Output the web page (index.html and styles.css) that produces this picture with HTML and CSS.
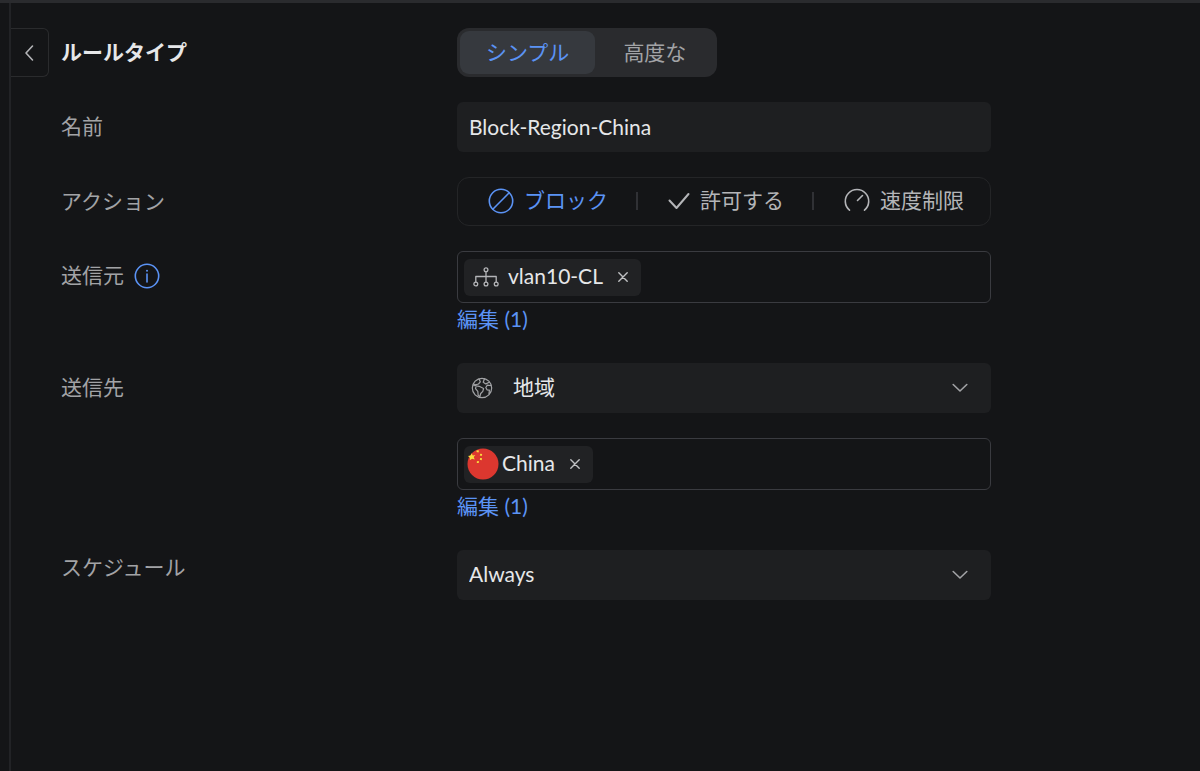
FILE: index.html
```html
<!DOCTYPE html>
<html lang="ja">
<head>
<meta charset="utf-8">
<meta name="viewport" content="width=device-width, initial-scale=1">
<title>ルールタイプ</title>
<link rel="stylesheet" href="styles.css">
</head>
<body>
<main class="panel">
  <button class="back" type="button" aria-label="戻る">
    <svg width="10" height="18" viewBox="0 0 10 18"><path d="M8.500 2 2 9l6.500 7"/></svg>
  </button>
  <form class="rule-form">
    <h1 class="title" id="type-label">ルールタイプ</h1>
    <div class="segmented" role="radiogroup" aria-labelledby="type-label">
      <label class="segment"><input type="radio" name="type" checked><span>シンプル</span></label>
      <label class="segment"><input type="radio" name="type"><span>高度な</span></label>
    </div>

    <label class="label" for="rule-name">名前</label>
    <input class="control" id="rule-name" type="text" value="Block-Region-China">

    <span class="label" id="action-label">アクション</span>
    <div class="actions" role="radiogroup" aria-labelledby="action-label">
      <label class="action"><input type="radio" name="action" checked>
        <svg width="26" height="26" viewBox="0 0 26 26"><circle cx="13" cy="13" r="11.700"/><path d="M4.800 21.200 21.200 4.800"/></svg><span>ブロック</span></label>
      <label class="action"><input type="radio" name="action">
        <svg class="check" width="22" height="26" viewBox="0 0 22 26"><path d="m1.500 12.500 7 7.500 12-14"/></svg><span>許可する</span></label>
      <label class="action"><input type="radio" name="action">
        <svg width="26" height="26" viewBox="0 0 26 26"><path d="M5.500 22.200a11.700 11.700 0 1 1 15 0M13.500 12.500l5-5"/></svg><span>速度制限</span></label>
    </div>

    <div class="label with-info"><label for="source">送信元</label>
      <button class="info" type="button" aria-label="情報">
        <svg width="26" height="26" viewBox="0 0 26 26"><circle cx="13" cy="13" r="11.700"/><path d="M13 11v8"/><circle class="dot" cx="13" cy="7.800" r="1"/></svg>
      </button>
    </div>
    <div class="field">
      <div class="tag-box">
        <span class="tag">
          <svg class="network" width="26" height="20" viewBox="0 0 26 20"><circle cx="13" cy="2.800" r="1.900"/><circle cx="2.800" cy="17" r="1.900"/><circle cx="13" cy="17" r="1.900"/><circle cx="23.200" cy="17" r="1.900"/><path d="M13 4.700v10.400M2.800 15.100V9.500h20.400v5.600"/></svg>
          <span class="text">vlan10-CL</span>
          <button class="remove" type="button" aria-label="vlan10-CL を削除"><svg width="10" height="10" viewBox="0 0 10 10"><path d="m.8.800 8.400 8.400M9.200.8.800 9.200"/></svg></button>
        </span>
        <input class="tag-input" id="source" type="text">
      </div>
      <a class="edit" href="#source">編集 (1)</a>
    </div>

    <label class="label" for="destination">送信先</label>
    <div class="select-wrap">
      <select class="control with-icon" id="destination"><option>地域</option></select>
      <svg class="globe" width="22" height="22" viewBox="0 0 22 22"><circle cx="11" cy="11" r="9.700"/><path d="M8 2l1.300 2.800L7.500 7 4.500 7.800 2.500 7M2.800 8.500l5.400.8 4.400 2.200-.8 2.800-2.100 2.200-.8 3-1.700-1-.4-4.200-2.300-2.700.7-2.800M13.500 1.800l-1.300 3.400 2.600 1.700 3.500-1.600M20 8.500l-3.700-.3-1.500 2.300 1.200 2.300 2.400.3-.4 3.800"/></svg>
      <svg class="chevron" width="16" height="10" viewBox="0 0 16 10"><path d="m1.200 1.500 6.800 6.500 6.800-6.500"/></svg>
    </div>

    <div class="field region">
      <div class="tag-box">
        <span class="tag flag-tag">
          <svg class="flag" width="32" height="32" viewBox="0 0 32 32"><circle cx="16" cy="16" r="15.500" fill="#dc372f"/><g fill="#f8dc3d"><path d="m4.600 5.200 1.200 2.200 2.600-.4-1.700 2.100 1 2.500-2.600-.8-2.300 1.500.1-2.600L1 8l2.600-.4z"/><path d="m9.700 2.200 2.300.2-.5 2-2-.3zM13.200 5.700l2 .4-.5 2-1.900-.5zM13.100 10l2 .2-.4 2-1.900-.4zM9.900 13.200l2-.2-.1 2-2 .1z"/></g></svg>
          <span class="text">China</span>
          <button class="remove" type="button" aria-label="China を削除"><svg width="10" height="10" viewBox="0 0 10 10"><path d="m.8.800 8.400 8.400M9.200.8.800 9.200"/></svg></button>
        </span>
        <input class="tag-input" id="region" type="text" aria-label="地域">
      </div>
      <a class="edit" href="#region">編集 (1)</a>
    </div>

    <label class="label schedule-label" for="schedule">スケジュール</label>
    <div class="select-wrap">
      <select class="control" id="schedule"><option>Always</option></select>
      <svg class="chevron" width="16" height="10" viewBox="0 0 16 10"><path d="m1.200 1.500 6.800 6.500 6.800-6.500"/></svg>
    </div>
  </form>
</main>
</body>
</html>
```
FILE: styles.css
```css
* { box-sizing: border-box; }

body {
  margin: 0;
  min-height: 100vh;
  display: flex;
  flex-direction: column;
  padding-left: 9px;
  background: #141517;
  box-shadow: inset 0 3px #2a2b2e;
  color: #e6e7e9;
  font: 21px/30px Lato, "Noto Sans CJK JP", sans-serif;
}

button, input, select { font: inherit; color: inherit; }
button { padding: 0; border: 0; background: none; cursor: pointer; }

svg {
  display: block;
  flex: none;
  fill: none;
  stroke: currentColor;
  stroke-width: 1.6;
  stroke-linecap: round;
  stroke-linejoin: round;
}

.panel {
  flex: 1;
  display: flex;
  align-items: flex-start;
  gap: 12px;
  margin-top: 3px;
  padding: 25px 24px 25px 0;
  border-left: 2px solid #222326;
}

.back {
  display: grid;
  place-items: center;
  flex: none;
  width: 38px;
  height: 49px;
  padding-right: 2px;
  border: 1px solid #2a2b2d;
  border-left: 0;
  border-radius: 0 6px 6px 0;
  color: #b4b5b8;
}

.rule-form {
  flex: 1;
  display: grid;
  grid-template-columns: 396px minmax(0, 534px);
  row-gap: 25px;
  align-items: start;
}

.title { margin: 0; font-size: 21px; line-height: 48px; font-weight: 700; }
.label { color: #a2a3a6; line-height: 48px; }
.schedule-label { line-height: 34px; }

.with-info { display: flex; align-items: center; gap: 10px; }
.info { padding-top: 2px; color: #5b93f5; }
.dot { fill: currentColor; stroke: none; }

.segmented {
  display: flex;
  justify-self: start;
  padding: 3px;
  border-radius: 12px;
  background: #2a2b2e;
}

.segment { position: relative; color: #a2a3a6; }
.segment span { display: block; padding: 0 28px 2px; line-height: 41px; border-radius: 9px; }
.segment:first-child span { padding: 0 26px 2px; }
.segment input, .action input { position: absolute; margin: 0; opacity: 0; }
.segment input:checked + span { background: #36393e; color: #5b93f5; }

.control {
  width: 100%;
  height: 50px;
  padding: 0 12px 2px;
  border: 0;
  border-radius: 6px;
  background: #1e1f21;
  appearance: none;
}

.actions {
  display: flex;
  height: 49px;
  align-items: center;
  justify-content: space-between;
  padding: 0 26px 2px 30px;
  border: 1px solid #242527;
  border-radius: 12px;
}

.action { position: relative; display: flex; align-items: center; gap: 10px; color: #b4b5b8; }
.action span { padding-bottom: 2px; }
.action:has(input:checked) { color: #5b93f5; }
.action + .action::before { content: ""; width: 2px; height: 18px; margin-right: 20px; background: #303135; }
.check { stroke-width: 2; }

.tag-box {
  display: flex;
  height: 52px;
  align-items: center;
  padding: 0 6px;
  border: 1px solid #3a3b40;
  border-radius: 6px;
}

.tag {
  display: flex;
  align-items: center;
  gap: 9px;
  height: 37px;
  padding: 0 13px 0 9px;
  border-radius: 6px;
  background: #212224;
}

.text { padding-bottom: 2px; }
.network { color: #b4b5b8; stroke-width: 1.3; }
.flag { stroke: none; }
.flag-tag { gap: 3px; padding-left: 3px; }
.remove { margin-left: 6px; color: #bfc0c2; }
.remove svg { stroke-width: 1.4; }
.flag-tag .remove { margin-left: 12px; }
.tag-input { flex: 1; min-width: 0; height: 40px; border: 0; background: none; outline: 0; }
.edit { display: block; padding-bottom: 3px; line-height: 32px; color: #5b93f5; text-decoration: none; }
.region { grid-column: 2; }

.select-wrap { position: relative; }
.with-icon { padding-left: 56px; }
.globe, .chevron { position: absolute; top: 0; bottom: 0; margin: auto; pointer-events: none; color: #a2a3a6; }
.globe { left: 14px; stroke-width: 1.2; }
.chevron { right: 23px; }
```
